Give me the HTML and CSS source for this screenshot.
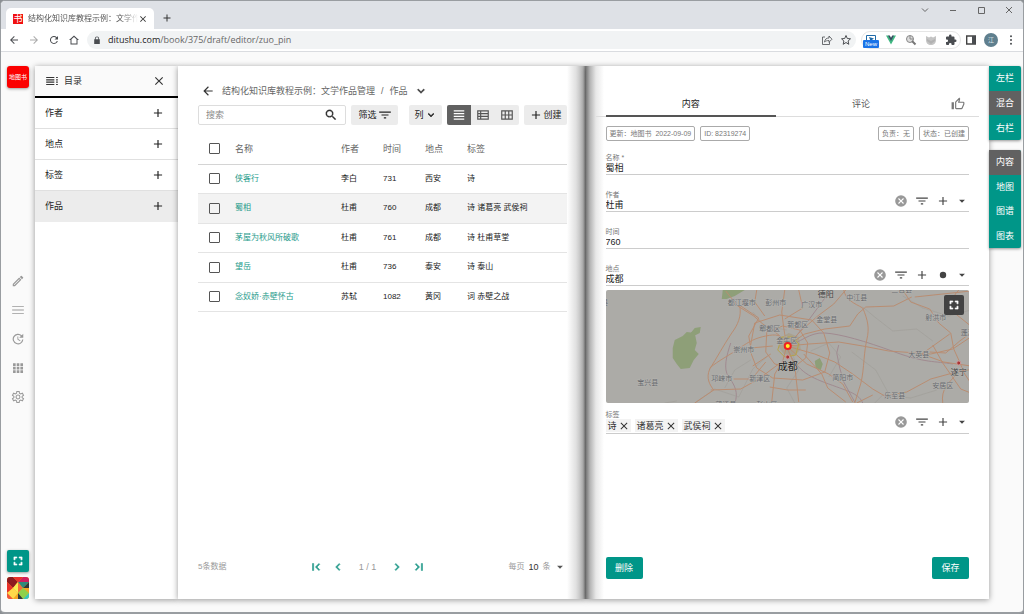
FILE: index.html
```
<!DOCTYPE html>
<html lang="zh-CN">
<head>
    <meta charset="UTF-8">
    <meta name="viewport" content="width=device-width, initial-scale=1.0">
    <title>结构化知识库教程示例：文学作品管理</title>
    <link rel="stylesheet" href="styles.css">
</head>
<body>
    <svg class="defs" aria-hidden="true">
        <symbol id="plus" viewBox="0 0 24 24"><path d="M19 13h-6v6h-2v-6H5v-2h6V5h2v6h6z"/></symbol>
        <symbol id="close" viewBox="0 0 24 24"><path d="M19 6.4 17.600 5 12 10.600 6.400 5 5 6.400 10.600 12 5 17.600 6.400 19 12 13.400 17.600 19 19 17.600 13.400 12z"/></symbol>
        <symbol id="back" viewBox="0 0 24 24"><path d="M20 11H7.800l5.600-5.600L12 4l-8 8 8 8 1.400-1.400L7.800 13H20z"/></symbol>
        <symbol id="down" viewBox="0 0 24 24"><path d="M7.400 8.600 12 13.200l4.600-4.600L18 10l-6 6-6-6z" stroke="currentColor"/></symbol>
        <symbol id="caret" viewBox="0 0 24 24"><path d="m5 9 7 7 7-7z"/></symbol>
        <symbol id="filter" viewBox="0 0 24 24"><path d="M10 18h4v-2h-4zM2 6v2h20V6zm4 7h12v-2H6z"/></symbol>
        <symbol id="cancel" viewBox="0 0 24 24"><path d="M12 2a10 10 0 1 0 0 20 10 10 0 0 0 0-20zm5 13.600L15.600 17 12 13.400 8.400 17 7 15.600l3.600-3.600L7 8.400 8.400 7l3.600 3.600L15.600 7 17 8.400 13.400 12z"/></symbol>
        <symbol id="full" viewBox="0 0 24 24"><path d="M7 14H5v5h5v-2H7zm-2-4h2V7h3V5H5zm12 7h-3v2h5v-5h-2zM14 5v2h3v3h2V5z" stroke="currentColor"/></symbol>
        <symbol id="prev" viewBox="0 0 24 24"><path d="M15.400 7.400 14 6l-6 6 6 6 1.400-1.400-4.600-4.600z" stroke="currentColor"/></symbol>
        <symbol id="next" viewBox="0 0 24 24"><path d="M10 6 8.600 7.400l4.600 4.600-4.600 4.600L10 18l6-6z" stroke="currentColor"/></symbol>
    </svg>

    <div class="window">
        <header class="tabbar">
            <div class="tab">
                <span class="favicon">书</span>
                <span class="tab-title">结构化知识库教程示例：文学作品管理</span>
                <button class="icon-btn" aria-label="关闭标签页"><svg class="i10"><use href="#close"/></svg></button>
            </div>
            <button class="icon-btn new-tab" aria-label="新标签页"><svg class="i12"><use href="#plus"/></svg></button>
            <div class="win-btns">
                <button class="icon-btn" aria-label="搜索标签页"><svg class="i8 line" viewBox="0 0 8 8"><path d="m1 2.500 3 3 3-3"/></svg></button>
                <button class="icon-btn" aria-label="最小化"><svg class="i8 line" viewBox="0 0 8 8"><path d="M1 4.500h6"/></svg></button>
                <button class="icon-btn" aria-label="最大化"><svg class="i8 line" viewBox="0 0 8 8"><path d="M1.500 1.500h6v6h-6z"/></svg></button>
                <button class="icon-btn" aria-label="关闭"><svg class="i8 line" viewBox="0 0 8 8"><path d="m1 1 6 6M7 1 1 7"/></svg></button>
            </div>
        </header>

        <nav class="toolbar">
            <div class="nav-btns">
                <button class="icon-btn" aria-label="后退"><svg class="i12"><use href="#back"/></svg></button>
                <button class="icon-btn off" aria-label="前进"><svg class="i12 flip"><use href="#back"/></svg></button>
                <button class="icon-btn" aria-label="刷新"><svg class="i12" viewBox="0 0 24 24"><path d="M17.600 6.300A8 8 0 1 0 19.700 14h-2.100A6 6 0 1 1 12 6c1.700 0 3.100.7 4.200 1.800L13 11h7V4z"/></svg></button>
                <button class="icon-btn" aria-label="主页"><svg class="i12" viewBox="0 0 24 24"><path d="M12 3 2 12h3v9h14v-9h3zm-5 16v-8.500l5-4.500 5 4.500V19z"/></svg></button>
            </div>
            <div class="omnibox">
                <svg class="i8 lock" viewBox="0 0 8 8"><path d="M1.200 3.300h.7V2.500a2.100 2.100 0 0 1 4.200 0v.8h.7V8H1.200zm1.500 0h2.600v-.8a1.300 1.300 0 0 0-2.600 0z"/></svg>
                <span class="url"><b>ditushu.com</b>/book/375/draft/editor/zuo_pin</span>
                <button class="icon-btn" aria-label="分享"><svg class="i12 line" viewBox="0 0 12 12"><path d="M4 3H1.500v7.500h7V8M3.500 8c.5-3 2-4 4.500-4V2l3 3.200L8 8.200V6.500C6 6.500 4.600 7 3.500 8z" stroke-width=".8"/></svg></button>
                <button class="icon-btn" aria-label="收藏"><svg class="i12 line" viewBox="0 0 12 12"><path d="m6 1.500 1.300 3 3.200.3-2.400 2.200.7 3.300L6 8.500l-2.800 1.800.7-3.300-2.400-2.200 3.200-.3z"/></svg></button>
            </div>
            <div class="exts">
                <button class="icon-btn ext-new" aria-label="截图">
                    <svg class="i12" viewBox="0 0 12 12"><path d="M1.500 1.500h9v8h-9z" fill="none" stroke="#1f6aa8"/><path d="m4 3 5 1.500L5.500 7z" fill="#1f6aa8"/></svg>
                    <span class="badge">New</span>
                </button>
                <button class="icon-btn" aria-label="Vue"><svg class="i12" viewBox="0 0 12 12"><path d="M1 1.500h2.400L6 6l2.600-4.500H11l-5 9z" fill="#41b883"/><path d="M3 1.500h1.800L6 3.700l1.200-2.200H9L6 7z" fill="#34495e"/></svg></button>
                <button class="icon-btn" aria-label="查找"><svg class="i12" viewBox="0 0 12 12"><circle cx="5" cy="5" r="3.500" fill="#ddd" stroke="#888"/><path d="M5 2v3h3" fill="none" stroke="#888"/><path d="m7 7 3.500 3.500" stroke="#777" stroke-width="2"/></svg></button>
                <button class="icon-btn" aria-label="盾牌"><svg class="i12" viewBox="0 0 12 12"><path d="m1 2 3 1.500L6 2.500l2 1L11 2v4c0 3-2 5-5 5S1 9 1 6z" fill="#c4c4c4"/><path d="m2 5 4 2 4-2v2L6 10 2 7z" fill="#999" opacity=".4"/></svg></button>
                <button class="icon-btn" aria-label="扩展程序"><svg class="i12" viewBox="0 0 24 24"><path d="M20.500 11H19V7a2 2 0 0 0-2-2h-4V3.500a2.500 2.500 0 0 0-5 0V5H4a2 2 0 0 0-2 2v3.800h1.500a2.700 2.700 0 0 1 0 5.400H2V20a2 2 0 0 0 2 2h3.800v-1.500a2.700 2.700 0 0 1 5.400 0V22H17a2 2 0 0 0 2-2v-4h1.500a2.500 2.500 0 0 0 0-5z"/></svg></button>
            </div>
            <div class="profile">
                <button class="icon-btn" aria-label="侧边栏"><svg class="i12" viewBox="0 0 12 12"><path d="M1.700 2h8.600v8H1.700z" fill="none" stroke="#444" stroke-width="1.400"/><path d="M7 2h3.500v8H7z"/></svg></button>
                <button class="user">江</button>
                <button class="icon-btn" aria-label="菜单"><svg class="i12" viewBox="0 0 24 24"><circle cx="12" cy="4.500" r="2"/><circle cx="12" cy="12" r="2"/><circle cx="12" cy="19.500" r="2"/></svg></button>
            </div>
        </nav>

        <div class="page">
            <aside class="rail">
                <a href="#" class="logo">地图书</a>
                <div class="rail-tools">
                    <button class="icon-btn" aria-label="编辑"><svg class="i14" viewBox="0 0 24 24"><path d="m14 9 1 1-9.200 9H5v-.9zM17.700 3a1 1 0 0 0-.7.300l-1.900 1.800 3.800 3.800L20.700 7a1 1 0 0 0 0-1.400l-2.300-2.300a1 1 0 0 0-.7-.3zM14 6.200 3 17.300V21h3.800L17.800 9.900z"/></svg></button>
                    <button class="icon-btn" aria-label="列表"><svg class="i14" viewBox="0 0 24 24"><path d="M2 5h20v1.500H2zm0 6.200h20v1.500H2zm0 6.300h20V19H2z"/></svg></button>
                    <button class="icon-btn" aria-label="历史"><svg class="i14" viewBox="0 0 24 24"><path d="M21 10V3l-2.500 2.500A9.200 9.200 0 1 0 21.200 13h-2A7.200 7.200 0 1 1 17 7l-3 3zM11 7.500V13l4.500 2.700.8-1.300-3.800-2.200V7.500z"/></svg></button>
                    <button class="icon-btn" aria-label="应用"><svg class="i14" viewBox="0 0 24 24"><path d="M3.500 4h4.500v4.500H3.500zm6.300 0h4.500v4.500H9.800zm6.300 0h4.500v4.500h-4.500zM3.500 10h4.500v4.500H3.500zm6.300 0h4.500v4.500H9.800zm6.300 0h4.500v4.500h-4.500zM3.500 16h4.500v4.500H3.500zm6.300 0h4.500v4.500H9.800zm6.300 0h4.500v4.500h-4.500z"/></svg></button>
                    <button class="icon-btn" aria-label="设置"><svg class="i14 line" viewBox="0 0 24 24" stroke-width="1.800"><path d="M9.500 5.500 10 2.500h4l.5 3 2 1.200 3-1.200 2 3.500-2.500 2v2l2.500 2-2 3.500-3-1.200-2 1.200-.5 3h-4l-.5-3-2-1.200-3 1.200-2-3.500 2.500-2v-2L2.500 9l2-3.500 3 1.200z"/><circle cx="12" cy="12" r="3.300"/></svg></button>
                </div>
                <button class="rail-full" aria-label="全屏"><svg class="i14"><use href="#full"/></svg></button>
                <svg class="avatar" viewBox="0 0 22 22">
                    <path fill="#f5a623" d="M0 0h22v22H0z"/>
                    <path fill="#8d1a20" d="M0 0h6l5 5-5 6-6-6z"/><path fill="#e9302a" d="m6 0 5 5 5-5zM0 5l6 6-6 5z"/><path fill="#f4703a" d="m11 5 5 6-5 5-5-5z"/>
                    <path fill="#d01f5d" d="M16 0h6v5h-6l-5 0z"/><path fill="#2f8a7c" d="m22 5-6 6-5-6z"/><path fill="#8fd14a" d="m11 16 5-5 6 5-6 6z"/>
                    <path fill="#ffd84a" d="m6 11 5 5-5 6-6-6z"/><path fill="#f7ef52" d="m6 11 5-6v11z"/><path fill="#30383d" d="m11 16 5 6h-5zM22 5v6h-6z"/><path fill="#35c8bd" d="m22 16-6 6h6z"/><path fill="#f0563a" d="m0 16 6 6H0z"/>
                </svg>
            </aside>

            <aside class="catalog">
                <div class="catalog-head">
                    <svg class="i14" viewBox="0 0 24 24"><path d="M2 5h14v2H2zm0 4h14v2H2zm0 4h14v2H2zm0 4h14v2H2zM19 5h3v2h-3zm0 4h3v2h-3zm0 4h3v2h-3zm0 4h3v2h-3z"/></svg>
                    <span>目录</span>
                    <button class="icon-btn" aria-label="关闭目录"><svg class="i14"><use href="#close"/></svg></button>
                </div>
                <ul>
                    <li><a href="#">作者</a><button class="icon-btn" aria-label="添加作者"><svg class="i14"><use href="#plus"/></svg></button></li>
                    <li><a href="#">地点</a><button class="icon-btn" aria-label="添加地点"><svg class="i14"><use href="#plus"/></svg></button></li>
                    <li><a href="#">标签</a><button class="icon-btn" aria-label="添加标签"><svg class="i14"><use href="#plus"/></svg></button></li>
                    <li class="on"><a href="#">作品</a><button class="icon-btn" aria-label="添加作品"><svg class="i14"><use href="#plus"/></svg></button></li>
                </ul>
            </aside>

            <main class="list">
                <div class="crumbs">
                    <button class="icon-btn" aria-label="返回"><svg class="i14"><use href="#back"/></svg></button>
                    <a href="#">结构化知识库教程示例：文学作品管理</a>
                    <span class="slash">/</span>
                    <a href="#">作品</a>
                    <button class="icon-btn" aria-label="切换"><svg class="i14"><use href="#down"/></svg></button>
                </div>

                <div class="actions">
                    <div class="search">
                        <input type="text" placeholder="搜索" aria-label="搜索">
                        <button class="icon-btn" aria-label="搜索"><svg class="i14" viewBox="0 0 24 24"><path d="M15.500 14h-.8l-.3-.3a6.500 6.500 0 1 0-.7.7l.3.3v.8l5 5 1.500-1.500zm-6 0a4.500 4.500 0 1 1 0-9 4.500 4.500 0 0 1 0 9z" stroke="currentColor" stroke-width=".5"/></svg></button>
                    </div>
                    <button class="btn">筛选<svg class="i14"><use href="#filter"/></svg></button>
                    <button class="btn cols">列<svg class="i12"><use href="#down"/></svg></button>
                    <div class="views">
                        <button class="on" aria-label="列表视图"><svg class="i14" viewBox="0 0 24 24"><path d="M3 4h18v2H3zm0 4.700h18v2H3zm0 4.600h18v2H3zM3 18h18v2H3z"/></svg></button>
                        <button aria-label="明细视图"><svg class="i14" viewBox="0 0 24 24"><path fill-rule="evenodd" d="M2 4h20v16H2zm2 2v2.500h3V6zm5 0v2.500h11V6zm-5 4.700v2.600h3v-2.600zm5 0v2.600h11v-2.600zm-5 4.800V18h3v-2.500zm5 0V18h11v-2.500z"/></svg></button>
                        <button aria-label="网格视图"><svg class="i14" viewBox="0 0 24 24"><path fill-rule="evenodd" d="M2 4h20v16H2zm2 2v5h4V6zm6 0v5h4V6zm6 0v5h4V6zM4 13v5h4v-5zm6 0v5h4v-5zm6 0v5h4v-5z"/></svg></button>
                    </div>
                    <button class="btn create"><svg class="i14"><use href="#plus"/></svg>创建</button>
                </div>

                <table>
                    <thead>
                        <tr><th class="c-check"><input type="checkbox" aria-label="全选"></th><th class="c-name">名称</th><th class="c-mid">作者</th><th class="c-mid">时间</th><th class="c-mid">地点</th><th>标签</th></tr>
                    </thead>
                    <tbody>
                        <tr><td><input type="checkbox" aria-label="侠客行"></td><td><a href="#">侠客行</a></td><td>李白</td><td>731</td><td>西安</td><td>诗</td></tr>
                        <tr class="on"><td><input type="checkbox" aria-label="蜀相"></td><td><a href="#">蜀相</a></td><td>杜甫</td><td>760</td><td>成都</td><td>诗 诸葛亮 武侯祠</td></tr>
                        <tr><td><input type="checkbox" aria-label="茅屋为秋风所破歌"></td><td><a href="#">茅屋为秋风所破歌</a></td><td>杜甫</td><td>761</td><td>成都</td><td>诗 杜甫草堂</td></tr>
                        <tr><td><input type="checkbox" aria-label="望岳"></td><td><a href="#">望岳</a></td><td>杜甫</td><td>736</td><td>泰安</td><td>诗 泰山</td></tr>
                        <tr><td><input type="checkbox" aria-label="念奴娇·赤壁怀古"></td><td><a href="#">念奴娇·赤壁怀古</a></td><td>苏轼</td><td>1082</td><td>黄冈</td><td>词 赤壁之战</td></tr>
                    </tbody>
                </table>

                <footer class="pager">
                    <span class="total">5条数据</span>
                    <div class="pages">
                        <button class="icon-btn" aria-label="首页"><svg class="i14" viewBox="0 0 24 24"><path d="M18.400 16.600 13.800 12l4.600-4.600L17 6l-6 6 6 6zM6 6h2v12H6z" stroke="currentColor"/></svg></button>
                        <button class="icon-btn" aria-label="上一页"><svg class="i14"><use href="#prev"/></svg></button>
                        <span>1 / 1</span>
                        <button class="icon-btn" aria-label="下一页"><svg class="i14"><use href="#next"/></svg></button>
                        <button class="icon-btn" aria-label="末页"><svg class="i14" viewBox="0 0 24 24"><path d="M5.600 7.400 10.200 12l-4.600 4.600L7 18l6-6-6-6zM16 6h2v12h-2z" stroke="currentColor"/></svg></button>
                    </div>
                    <div class="size">
                        <label for="size">每页</label>
                        <select id="size"><option>10</option><option>20</option></select>
                        <span>条</span>
                        <svg class="i10"><use href="#caret"/></svg>
                    </div>
                </footer>
            </main>

            <section class="detail">
                <div class="tabs">
                    <button class="on">内容</button>
                    <button>评论</button>
                    <button class="like" aria-label="点赞"><svg class="i14" viewBox="0 0 24 24"><path d="M9 21h9c.8 0 1.500-.5 1.800-1.200l3-7.100c.1-.2.2-.5.2-.7v-2a2 2 0 0 0-2-2h-6.300l1-4.600v-.3c0-.4-.2-.8-.5-1.100L14.200 1 7.600 7.600C7.200 8 7 8.500 7 9v10c0 1.100.9 2 2 2zM9 9l4.300-4.300L12 10h9v2l-3 7H9zM1 9h4v12H1z"/></svg></button>
                </div>
                <form>
                    <div class="meta">
                        <span>更新：地图书&nbsp; 2022-09-09</span>
                        <span>ID: 82319274</span>
                        <span class="push">负责：无</span>
                        <span>状态：已创建</span>
                    </div>
                    <div class="field">
                        <div class="value"><label for="name">名称 *</label><input id="name" type="text" value="蜀相"></div>
                    </div>
                    <div class="field">
                        <div class="value"><label for="author">作者</label><input id="author" type="text" value="杜甫"></div>
                        <div class="tools">
                            <button type="button" class="icon-btn grey" aria-label="清除"><svg class="i14"><use href="#cancel"/></svg></button>
                            <button type="button" class="icon-btn" aria-label="筛选"><svg class="i14"><use href="#filter"/></svg></button>
                            <button type="button" class="icon-btn" aria-label="添加"><svg class="i14"><use href="#plus"/></svg></button>
                            <button type="button" class="icon-btn" aria-label="展开"><svg class="i10"><use href="#caret"/></svg></button>
                        </div>
                    </div>
                    <div class="field">
                        <div class="value"><label for="year">时间</label><input id="year" type="text" value="760"></div>
                    </div>
                    <div class="field">
                        <div class="value"><label for="place">地点</label><input id="place" type="text" value="成都"></div>
                        <div class="tools">
                            <button type="button" class="icon-btn grey" aria-label="清除"><svg class="i14"><use href="#cancel"/></svg></button>
                            <button type="button" class="icon-btn" aria-label="筛选"><svg class="i14"><use href="#filter"/></svg></button>
                            <button type="button" class="icon-btn" aria-label="添加"><svg class="i14"><use href="#plus"/></svg></button>
                            <button type="button" class="icon-btn" aria-label="标记"><svg class="i14" viewBox="0 0 24 24"><circle cx="12" cy="12" r="5.500"/></svg></button>
                            <button type="button" class="icon-btn" aria-label="展开"><svg class="i10"><use href="#caret"/></svg></button>
                        </div>
                    </div>
                    <div class="map">
                        <svg viewBox="0 0 366 113" preserveAspectRatio="xMidYMid slice">
                            <path class="wood" d="m68 58 2-8 8-4 4-4 8 1 2 10-2 7 4 4-5 6-4 8-9 1-4-5-4-6zM86 43l4-5 6-1-1 6-8 4zM118 0h22l-10 6-8 3h-5zM210 71l5-3 3 6-2 6-5-2z"/>
                            <path class="city" d="M176 48l8-5 10 4 2 12-6 7-11-2-5-7z"/>
                            <g class="rail-line">
                                <path d="M182 56c14-3 22-14 38-13s40 8 70 19 40 9 58 12M182 58c10 22 20 28 42 36s30 10 34 19M126 53c-4 12-8 26-2 34s10 16 6 26M190 48l14-18 22-30M234 55l-2 8 3 15 4 14 11 20"/>
                            </g>
                            <g class="minor">
                                <path d="M90 113l20-14 24 8 14-28 14-12M258 17l12 10 18 14 24-2 16 12M247 62l24 18 12 22M298 6l20 12 26 8 22-6M146 70l-16 10-10 18M270 113l8-8 28 3 26-8M186 60l8 20-12 18 8 15M206 61l18-8 12 14-12 20M60 113l12-2M148 22l12 14 22 4"/>
                            </g>
                            <g class="road">
                                <path d="M121 1l12 15 16 10 9 8 15 10 11 12M135 16c2 10-2 19-8 27-8 12-15 25-22 36-4 9 0 16 4 21L90 113"/>
                                <path d="M105 78c8-7 20-13 30-20s16-10 26-12 16-2 21 8M106 100l30-1 18-10 20-15M136 16l18 12-10 18 2 12M146 58l22-2M148 76l18-12"/>
                                <path d="M182 56l-3-18-2-16 3-22M182 56l15-16 16-14 16-12 12-14M182 56l18-12 20-5 25-3 8-12 8-7 28-1 18-9M239 0c2 10 10 13 19 18 5 12 7 20 4 32-4 18-2 34-8 50l-4 13"/>
                                <path d="M182 56l22-2 30-2 24 4 26 5 42 3 22-5 18-12M182 56l28 8 20 8 18 12 20 15 12 7 22-4 24-13 22-6 20-4M268 105l-16 8M182 56l-4 15-8 13-3 28M182 56l8 20 4 36M182 56l20 18 22 10 14 10 10 18M199 64l18 20 6 14 18 14"/>
                                <path d="M162 42l16-6 17 4 8 13-2 15-13 10-18-4-9-12zM150 33l25-8 32 5 12 13 6 20-5 19-22 8-30-2-16-10-7-18z"/>
                                <path d="M298 0l8 12 19 7 9 14 12 10 3 16 5 11 6 14 6 9M328 55l10 18 18 26 10 4M354 0c-8 8-6 14-8 20l20 16M338 113c-2-14 6-20 14-29M325 62l16 1 14-12 11-8M345 44l-28 20 22 8 27 4M310 7l56-6M152 0l-2 12 10 14M165 97l18 3 18 0M161 72l-14 17-18 0M194 0l4 18-18 11"/>
                            </g>
                            <g class="ring"><path d="M177 47h11l6 7-3 11-11 2-7-7z"/></g>
                            <circle class="spot" cx="183" cy="67" r="2"/><circle class="spot" cx="354" cy="73" r="2"/>
                            <g class="names">
                                <text x="137" y="15">都江堰市</text><text x="171" y="15">彭州市</text><text x="207" y="17">广汉市</text>
                                <text x="252" y="10">中江县</text><text x="297" y="2">三台县</text><text x="222" y="32">金堂县</text>
                                <text x="193" y="37">新都区</text><text x="165" y="41">郫都区</text><text x="331" y="30">射洪市</text>
                                <text x="182" y="53">金牛区</text><text x="139" y="62">崇州市</text><text x="314" y="67">大英县</text>
                                <text x="43" y="95">宝兴县</text><text x="117" y="91">邛崃市</text><text x="155" y="91">新津区</text>
                                <text x="238" y="90">简阳市</text><text x="338" y="98">安居区</text><text x="290" y="108">乐至县</text>
                                <text x="121" y="117">蒲江县</text><text x="162" y="117">彭山区</text><text x="363" y="45">蓬溪</text><text x="0" y="15">县</text>
                            </g>
                            <g class="names big"><text x="221" y="7">德阳</text><text class="capital" x="183" y="80">成都</text><text x="354" y="85">遂宁</text></g>
                            <circle cx="183" cy="56" r="3" fill="#ffee2c" stroke="#e22" stroke-width="2"/>
                        </svg>
                        <button type="button" class="map-full" aria-label="全屏地图"><svg class="i14"><use href="#full"/></svg></button>
                    </div>
                    <div class="field tags">
                        <div class="value">
                            <span class="label">标签</span>
                            <div class="chips">
                                <span>诗<button type="button" class="icon-btn" aria-label="移除诗"><svg class="i12"><use href="#close"/></svg></button></span>
                                <span>诸葛亮<button type="button" class="icon-btn" aria-label="移除诸葛亮"><svg class="i12"><use href="#close"/></svg></button></span>
                                <span>武侯祠<button type="button" class="icon-btn" aria-label="移除武侯祠"><svg class="i12"><use href="#close"/></svg></button></span>
                            </div>
                        </div>
                        <div class="tools">
                            <button type="button" class="icon-btn grey" aria-label="清除"><svg class="i14"><use href="#cancel"/></svg></button>
                            <button type="button" class="icon-btn" aria-label="筛选"><svg class="i14"><use href="#filter"/></svg></button>
                            <button type="button" class="icon-btn" aria-label="添加"><svg class="i14"><use href="#plus"/></svg></button>
                            <button type="button" class="icon-btn" aria-label="展开"><svg class="i10"><use href="#caret"/></svg></button>
                        </div>
                    </div>
                    <div class="submit">
                        <button type="button">删除</button>
                        <button type="submit">保存</button>
                    </div>
                </form>
            </section>

            <nav class="side">
                <div class="side-group">
                    <button>左栏</button>
                    <button class="on">混合</button>
                    <button>右栏</button>
                </div>
                <div class="side-group four">
                    <button class="on">内容</button>
                    <button>地图</button>
                    <button>图谱</button>
                    <button>图表</button>
                </div>
            </nav>
        </div>
    </div>
</body>
</html>
```
FILE: styles.css
```
* {
    box-sizing: border-box;
}
body {
    margin: 0;
    background: #8b8f93;
    font: 9px/12px "Liberation Sans", "Noto Sans CJK SC", sans-serif;
    color: #333;
}
button, input, select {
    font: inherit;
    color: inherit;
    border: 0;
    padding: 0;
    margin: 0;
    background: none;
}
a {
    color: inherit;
    text-decoration: none;
}
svg {
    display: block;
    flex: none;
    fill: currentColor;
}
.defs {
    position: absolute;
    width: 0;
    height: 0;
}
.i8 { width: 8px; height: 8px; }
.i10 { width: 10px; height: 10px; }
.i12 { width: 12px; height: 12px; }
.i14 { width: 14px; height: 14px; }
.line {
    fill: none;
    stroke: currentColor;
}
.flip {
    transform: scaleX(-1);
}
.icon-btn {
    display: flex;
    flex: none;
    align-items: center;
    justify-content: center;
}

/* 浏览器窗口 */
.window {
    display: flex;
    flex-direction: column;
    height: 100vh;
    border: 1px solid #999da1;
    border-bottom-width: 2px;
    border-radius: 5px;
    overflow: hidden;
    background: #fafafa;
}
.tabbar {
    display: flex;
    align-items: flex-end;
    height: 28px;
    padding-left: 5px;
    background: #dee1e6;
}
.tab {
    display: flex;
    align-items: center;
    width: 148px;
    height: 21px;
    padding: 0 6px 0 7px;
    border-radius: 5px 5px 0 0;
    background: #fff;
}
.favicon {
    width: 10px;
    height: 10px;
    background: #f01010;
    color: #fff;
    font-size: 9px;
    line-height: 10px;
    text-align: center;
}
.tab-title {
    flex: 1;
    margin-left: 5px;
    overflow: hidden;
    white-space: nowrap;
    font-size: 8px;
    color: #555;
    -webkit-mask-image: linear-gradient(to right, #000 85%, transparent);
    mask-image: linear-gradient(to right, #000 85%, transparent);
}
.new-tab {
    margin: 0 0 5px 7px;
}
.win-btns {
    display: flex;
    gap: 20px;
    margin-left: auto;
    padding-right: 10px;
    align-self: flex-start;
    padding-top: 5px;
    color: #666;
}
.toolbar {
    display: flex;
    align-items: center;
    height: 23px;
    padding: 0 6px 0 7px;
    border-bottom: 1px solid #dadce0;
    background: #fff;
    color: #4a4d51;
}
.nav-btns {
    display: flex;
    gap: 8px;
    width: 79px;
}
.off {
    color: #aaa;
}
.omnibox {
    display: flex;
    flex: 1;
    align-items: center;
    gap: 7px;
    height: 18px;
    padding: 0 4px 0 6px;
    border-radius: 9px;
    background: #f1f3f4;
}
.url {
    flex: 1;
    font-family: "Open Sans", sans-serif;
    color: #666;
}
.url b {
    font-weight: 500;
    color: #222;
}
.exts {
    display: flex;
    align-items: center;
    gap: 8px;
    height: 18px;
    margin-left: 5px;
    padding: 0 3px;
    border: 1px solid #e6e6e6;
    border-radius: 9px;
}
.ext-new {
    position: relative;
}
.badge {
    position: absolute;
    top: 6px;
    left: -2px;
    width: 16px;
    height: 8px;
    border-radius: 1px;
    background: #1a73e8;
    color: #fff;
    font-size: 6px;
    line-height: 8px;
    text-align: center;
}
.profile {
    display: flex;
    align-items: center;
    gap: 7px;
    margin-left: 4px;
}
.user {
    width: 14px;
    height: 14px;
    border-radius: 50%;
    background: #5f7f8e;
    color: #dde6ea;
    font-size: 6px;
}

/* 页面 */
.page {
    display: flex;
    flex: 1;
    min-height: 0;
    padding: 14px 2px 13px 6px;
}
.rail {
    display: flex;
    flex: none;
    flex-direction: column;
    align-items: center;
    width: 22px;
    margin-right: 6px;
    color: #999;
}
.logo {
    width: 22px;
    height: 22px;
    border-radius: 3px;
    background: #fb0000;
    box-shadow: 0 1px 3px #999;
    color: #fff;
    font-size: 6px;
    line-height: 22px;
    text-align: center;
    white-space: nowrap;
}
.rail-tools {
    display: flex;
    flex: 1;
    flex-direction: column;
    justify-content: center;
    gap: 15px;
    padding-top: 40px;
}
.rail-full {
    display: flex;
    align-items: center;
    justify-content: center;
    width: 22px;
    height: 22px;
    margin-bottom: 5px;
    border-radius: 2px;
    background: #009688;
    box-shadow: 0 1px 3px #999;
    color: #fff;
}
.avatar {
    width: 22px;
    height: 22px;
    border-radius: 3px;
}
.catalog {
    flex: none;
    width: 143px;
    background: #fff;
    box-shadow: 0 1px 6px rgba(0, 0, 0, .4);
}
.catalog-head {
    display: flex;
    align-items: center;
    gap: 5px;
    height: 32px;
    padding: 0 12px 0 10px;
    border-bottom: 2px solid #000;
    background: #fafafa;
}
.catalog-head .icon-btn {
    margin-left: auto;
}
.catalog ul {
    margin: 0;
    padding: 0;
    list-style: none;
}
.catalog li {
    display: flex;
    align-items: center;
    justify-content: space-between;
    height: 31px;
    padding: 0 13px 0 10px;
    border-bottom: 1px solid #e0e0e0;
    color: #222;
}
.catalog li.on {
    background: #ececec;
    border-color: #ececec;
}

/* 列表 */
.list {
    display: flex;
    flex: 1 1 50%;
    flex-direction: column;
    min-width: 0;
    padding: 17px 19px 24px 20px;
    background: linear-gradient(to left, #777, #b4b4b4 3px, #e0e0e0 10px, #fff 19px);
    box-shadow: 0 1px 6px rgba(0, 0, 0, .4);
}
.crumbs {
    display: flex;
    align-items: center;
    gap: 6px;
    height: 16px;
    padding-left: 3px;
    color: #666;
}
.crumbs .icon-btn {
    color: #333;
}
.crumbs a:first-of-type {
    margin-left: 1px;
}
.actions {
    display: flex;
    gap: 5px;
    height: 20px;
    margin-top: 6px;
}
.search {
    display: flex;
    flex: 1;
    align-items: center;
    min-width: 0;
    padding: 0 7px;
    border: 1px solid #ddd;
    border-radius: 2px;
}
.search input {
    flex: 1;
    min-width: 0;
    outline: 0;
}
.search input::placeholder {
    color: #888;
}
.btn {
    display: flex;
    align-items: center;
    gap: 2px;
    padding: 0 6px 0 7px;
    border-radius: 2px;
    background: #ececec;
    color: #222;
}
.cols {
    gap: 1px;
    margin-left: 6px;
    padding: 0 5px;
}
.create {
    gap: 1px;
    padding: 0 5px;
}
.views {
    display: flex;
    border-radius: 2px;
    overflow: hidden;
    background: #ececec;
}
.views button {
    display: flex;
    align-items: center;
    justify-content: center;
    width: 24px;
    color: #555;
}
.views .on {
    background: #616161;
    color: #fff;
}
table {
    width: 100%;
    height: 178px;
    margin-top: 9px;
    border-collapse: collapse;
    table-layout: fixed;
    font-size: 8px;
    color: #222;
}
th, td {
    height: 29px;
    padding: 0;
    border-bottom: 1px solid #e4e4e4;
    text-align: left;
    white-space: nowrap;
}
th {
    height: 30px;
    border-color: #d4d4d4;
    font-size: 9px;
    font-weight: normal;
    color: #666;
}
td a {
    color: #269b8b;
}
tr.on {
    background: #f3f3f3;
}
.c-check { width: 37px; }
.c-name { width: 106px; }
.c-mid { width: 42px; }
input[type="checkbox"] {
    display: block;
    width: 11px;
    height: 11px;
    margin-left: 11px;
    border: 1px solid #555;
    border-radius: 1px;
    appearance: none;
}
.pager {
    display: flex;
    align-items: center;
    justify-content: space-between;
    height: 16px;
    margin-top: auto;
    font-size: 8px;
    color: #999;
}
.pages {
    display: flex;
    align-items: center;
    gap: 8px;
}
.pages span {
    padding: 0 6px;
    font-size: 9px;
}
.pages .icon-btn {
    color: #269b8b;
}
.size {
    display: flex;
    align-items: center;
    gap: 4px;
    padding-right: 2px;
}
.size select {
    width: 10px;
    appearance: none;
    font-size: 9px;
    color: #333;
}
.size svg {
    color: #555;
}

/* 详情 */
.detail {
    display: flex;
    flex: 1 1 50%;
    flex-direction: column;
    min-width: 0;
    padding: 27px 10px 20px;
    background: linear-gradient(to right, #777, #b4b4b4 4px, #e8e8e8 10px, #fff 18px);
    box-shadow: 0 1px 6px rgba(0, 0, 0, .4);
}
.tabs {
    display: flex;
    height: 24px;
    padding: 0 10px;
    border-bottom: 1px solid #ddd;
}
.tabs button {
    flex: 1;
    height: 24px;
    border-bottom: 2px solid transparent;
    color: #555;
}
.tabs .on {
    border-color: #555;
    color: #222;
}
.tabs .like {
    display: flex;
    flex: 0 0 23px;
    align-items: center;
    justify-content: center;
    color: #777;
}
form {
    display: flex;
    flex: 1;
    flex-direction: column;
    padding: 9px 10px 0;
}
.meta {
    display: flex;
    gap: 5px;
    margin-bottom: 12px;
    font-size: 7px;
    color: #777;
}
.meta span {
    padding: 0 3px;
    border: 1px solid #aaa;
    border-radius: 2px;
    line-height: 13px;
}
.meta .push {
    margin-left: auto;
}
.field {
    display: flex;
    align-items: center;
    height: 22px;
    margin-bottom: 15px;
    border-bottom: 1px solid #ccc;
}
.value {
    display: flex;
    flex: 1;
    flex-direction: column;
    align-self: flex-start;
}
.value label, .label {
    font-size: 7px;
    line-height: 9px;
    color: #777;
}
.value input {
    height: 11px;
    color: #222;
    outline: 0;
}
.tools {
    display: flex;
    gap: 7px;
    padding-right: 2px;
    color: #444;
}
.grey {
    color: #999;
}
.map {
    position: relative;
    height: 113px;
    margin-top: -11px;
    border-radius: 2px;
    overflow: hidden;
    background: #acaba7;
}
.map > svg {
    width: 100%;
    height: 100%;
}
.map-full {
    position: absolute;
    top: 5px;
    right: 5px;
    display: flex;
    align-items: center;
    justify-content: center;
    width: 20px;
    height: 20px;
    border-radius: 2px;
    background: #424242;
    color: #fff;
}
.wood { fill: #8e9f78; }
.city { fill: #a9a18e; }
.road, .rail-line, .minor, .ring { fill: none; }
.road { stroke: #b98d72; }
.rail-line { stroke: #a08a90; }
.minor { stroke: #9c9a95; stroke-width: .5; }
.ring { stroke: #b5a34c; }
.spot { fill: #a33; stroke: #c99; }
.names {
    font-size: 7px;
    text-anchor: middle;
    fill: #696b70;
    stroke: #b4b3af;
    stroke-width: 1;
    paint-order: stroke;
}
.big {
    font-size: 8px;
    fill: #444;
}
.capital {
    font-size: 10px;
    fill: #222;
}
.tags {
    height: 24px;
    margin: 7px 0 0;
}
.chips {
    display: flex;
    gap: 4px;
}
.chips span {
    display: flex;
    align-items: center;
    gap: 1px;
    height: 13px;
    padding: 0 1px 0 2px;
    background: #f3f3f3;
}
.submit {
    display: flex;
    justify-content: space-between;
    margin-top: auto;
}
.submit button {
    width: 37px;
    height: 22px;
    border-radius: 2px;
    background: #009688;
    color: #fff;
}

/* 右侧标签 */
.side {
    display: flex;
    flex: none;
    flex-direction: column;
    gap: 10px;
    width: 32px;
}
.side-group {
    display: flex;
    flex-direction: column;
    height: 74px;
    border-radius: 0 2px 2px 0;
    overflow: hidden;
    background: #009688;
    box-shadow: 0 1px 3px rgba(0, 0, 0, .4);
}
.four {
    height: 98px;
}
.side-group button {
    flex: 1;
    color: #fff;
}
.side-group .on {
    background: #616161;
}
```
